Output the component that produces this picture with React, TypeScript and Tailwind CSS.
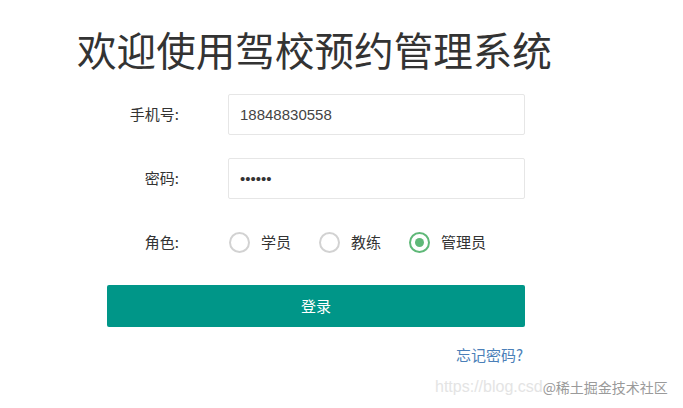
import { useState } from "react";

const roles = ["学员", "教练", "管理员"];

export default function App() {
  const [phone, setPhone] = useState("18848830558");
  const [password, setPassword] = useState("123456");
  const [role, setRole] = useState("管理员");

  return (
    <div className="relative h-[408px] w-[683px] overflow-hidden bg-white font-['Liberation_Sans','Noto_Sans_CJK_SC',sans-serif] text-[#333]">
      {/* TITLE */}
      <h1 className="ml-[77px] mt-[25px] text-[39.6px] font-normal leading-[48px] text-[#333] font-['Noto_Sans_CJK_SC',sans-serif]">
        欢迎使用驾校预约管理系统
      </h1>

      {/* FORM */}
      <form
        onSubmit={(e) => e.preventDefault()}
        className="ml-[107px] mt-[21px] flex w-[418px] flex-col"
      >
        {/* PHONE */}
        <div className="flex h-[41px] items-center">
          <label className="w-[72px] text-right text-[15px] text-[#333] font-['Noto_Sans_CJK_SC',sans-serif]">
            手机号:
          </label>
          <input
            type="text"
            value={phone}
            onChange={(e) => setPhone(e.target.value)}
            className="ml-[49px] h-[41px] w-[297px] rounded-[2px] border border-[#e6e6e6] bg-white px-[11px] text-[15px] text-[#444] outline-none"
          />
        </div>

        {/* PASSWORD */}
        <div className="mt-[23px] flex h-[41px] items-center">
          <label className="w-[72px] text-right text-[15px] text-[#333] font-['Noto_Sans_CJK_SC',sans-serif]">
            密码:
          </label>
          <input
            type="password"
            value={password}
            onChange={(e) => setPassword(e.target.value)}
            className="ml-[49px] h-[41px] w-[297px] rounded-[2px] border border-[#e6e6e6] bg-white px-[11px] text-[15px] text-[#333] outline-none"
          />
        </div>

        {/* ROLE */}
        <div className="mt-[23px] flex h-[41px] items-center">
          <label className="w-[72px] text-right text-[15px] text-[#333] font-['Noto_Sans_CJK_SC',sans-serif]">
            角色:
          </label>
          <div className="ml-[50px] flex items-center gap-[28px]">
            {roles.map((r) => (
              <button
                type="button"
                key={r}
                onClick={() => setRole(r)}
                className="flex items-center gap-[11px]"
              >
                {role === r ? (
                  <span className="flex h-[21px] w-[21px] items-center justify-center rounded-full border-2 border-[#5fb878]">
                    <span className="h-[9px] w-[9px] rounded-full bg-[#5fb878]" />
                  </span>
                ) : (
                  <span className="h-[21px] w-[21px] rounded-full border-2 border-[#d2d2d2]" />
                )}
                <span className="text-[15px] text-[#333] font-['Noto_Sans_CJK_SC',sans-serif]">
                  {r}
                </span>
              </button>
            ))}
          </div>
        </div>

        {/* BUTTON */}
        <button
          type="submit"
          className="mt-[22px] h-[42px] w-[418px] rounded-[2px] bg-[#009688] text-[15px] text-white font-['Noto_Sans_CJK_SC',sans-serif]"
        >
          登录
        </button>

        {/* FORGOT */}
        <div className="mt-[17px] flex justify-end pr-[2px]">
          <a className="text-[15px] text-[#4b7fb8] font-['Noto_Sans_CJK_SC',sans-serif]">
            忘记密码?
          </a>
        </div>
      </form>

      {/* WATERMARK */}
      <div className="absolute left-[435px] top-[375px] flex items-center whitespace-nowrap">
        <span className="text-[16px] text-[#e4e4e4]">https://blog.csd</span>
        <span className="text-[14px] text-[#9a9a9a] font-['Noto_Sans_CJK_SC',sans-serif]">@稀土掘金技术社区</span>
      </div>
    </div>
  );
}
